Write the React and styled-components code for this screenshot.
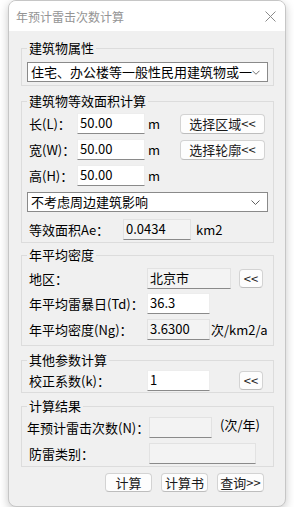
import React from 'react';
import styled, { createGlobalStyle } from 'styled-components';

const GlobalStyle = createGlobalStyle`
  body {
    margin: 0;
    background: #ffffff;
    font-family: "Noto Sans CJK SC", "Noto Sans", sans-serif;
    font-size: 13px;
    color: #000;
  }
`;

// dialog frame
const Window = styled.div`
  margin-left: 8px;
  width: 278px;
  box-sizing: border-box;
  border: 1px solid #c6c6c6;
  border-radius: 8px;
  overflow: hidden;
  background: #f0f0f0;
  box-shadow: 0 3px 10px rgba(0, 0, 0, 0.22);
`;

const TitleBar = styled.div`
  height: 30px;
  background: #ffffff;
  display: flex;
  align-items: center;
  justify-content: space-between;
  padding: 0 9px 0 7px;
  font-size: 12px;
  color: #949494;
`;

const Body = styled.div`
  padding: 8px 11px 14px 12px;
`;

const Group = styled.fieldset`
  margin: ${(p) => p.$mt || 0}px 0 0;
  padding: ${(p) => p.$pt}px 5px ${(p) => p.$pb}px;
  border: 1px solid #dcdcdc;
  min-width: 0;
`;

const Legend = styled.legend`
  padding: 0 2px;
  line-height: 18px;
  font-size: 13px;
`;

const Row = styled.div`
  display: flex;
  align-items: center;
  height: 21px;
  margin-top: ${(p) => p.$mt || 0}px;
`;

const Label = styled.span`
  box-sizing: border-box;
  width: ${(p) => p.$w}px;
  padding-left: ${(p) => (p.$pl ?? 2)}px;
  white-space: nowrap;
  line-height: 1.2;
`;

const Field = styled.input`
  box-sizing: border-box;
  width: ${(p) => p.$w}px;
  height: 21px;
  margin: 0;
  padding: 0 2px 2px;
  font: inherit;
  font-size: 13px;
  color: #000;
  background: ${(p) => (p.readOnly ? '#f3f3f3' : '#ffffff')};
  border: 1px solid ${(p) => (p.readOnly ? '#e2e2e2' : '#ededed')};
  border-bottom-color: #8a8a8a;
  outline: none;
`;

const Unit = styled.span`
  margin-left: ${(p) => p.$ml || 3}px;
  white-space: nowrap;
  line-height: 1.2;
  align-self: ${(p) => (p.$top ? 'flex-start' : 'center')};
`;

const Button = styled.button`
  box-sizing: border-box;
  width: ${(p) => p.$w}px;
  height: ${(p) => p.$h || 20}px;
  margin: 0 ${(p) => p.$mr || 0}px 0 ${(p) => (p.$ml === 'auto' ? 'auto' : `${p.$ml || 0}px`)};
  padding: 0;
  font: inherit;
  font-size: 13px;
  line-height: 1;
  color: #1a1a1a;
  background: #fdfdfd;
  border: 1px solid #d3d3d3;
  border-bottom-color: #bdbdbd;
  border-radius: 4px;
`;

const Combo = styled.div`
  box-sizing: border-box;
  height: 20px;
  margin-top: ${(p) => p.$mt || 0}px;
  display: flex;
  align-items: center;
  padding: 0 7px 0 3px;
  background: #ffffff;
  border: 1px solid #8a8a8a;
`;

const ComboText = styled.span`
  flex: 1;
  white-space: nowrap;
  line-height: 18px;
`;

const Footer = styled.div`
  display: flex;
  justify-content: flex-end;
  gap: 9px;
  margin-top: 6px;
  padding-right: 10px;
`;

const Chevron = () => (
  <svg width="9" height="5" viewBox="0 0 9 5">
    <path d="M0.5 0.5 L4.5 4.5 L8.5 0.5" fill="none" stroke="#606060" strokeWidth="1" />
  </svg>
);

const CloseIcon = () => (
  <svg width="11" height="11" viewBox="0 0 11 11">
    <path d="M0.5 0.5 L10.5 10.5 M10.5 0.5 L0.5 10.5" stroke="#8a8a8a" strokeWidth="1" />
  </svg>
);

const App = () => {
  return (
    <>
      <GlobalStyle />
      <Window>
        <TitleBar>
          <span>年预计雷击次数计算</span>
          <CloseIcon />
        </TitleBar>
        <Body>
          <Group $pt={5} $pb={3}>
            <Legend>建筑物属性</Legend>
            <Combo>
              <ComboText>住宅、办公楼等一般性民用建筑物或一</ComboText>
              <Chevron />
            </Combo>
          </Group>

          <Group $mt={6} $pt={3} $pb={2}>
            <Legend>建筑物等效面积计算</Legend>
            <Row>
              <Label $w={50}>长(L)：</Label>
              <Field $w={68} defaultValue="50.00" />
              <Unit>m</Unit>
              <Button $w={85} $ml="auto" $mr={3}>选择区域&lt;&lt;</Button>
            </Row>
            <Row $mt={5}>
              <Label $w={50}>宽(W)：</Label>
              <Field $w={68} defaultValue="50.00" />
              <Unit>m</Unit>
              <Button $w={85} $ml="auto" $mr={3}>选择轮廓&lt;&lt;</Button>
            </Row>
            <Row $mt={5}>
              <Label $w={50}>高(H)：</Label>
              <Field $w={68} defaultValue="50.00" />
              <Unit>m</Unit>
            </Row>
            <Combo $mt={6}>
              <ComboText>不考虑周边建筑影响</ComboText>
              <Chevron />
            </Combo>
            <Row $mt={7}>
              <Label $w={96}>等效面积Ae：</Label>
              <Field $w={68} readOnly defaultValue="0.0434" />
              <Unit $ml={5}>km2</Unit>
            </Row>
          </Group>

          <Group $mt={3} $pt={4} $pb={5}>
            <Legend>年平均密度</Legend>
            <Row>
              <Label $w={120}>地区：</Label>
              <Field $w={84} readOnly defaultValue="北京市" />
              <Button $w={24} $h={19} $ml={8}>&lt;&lt;</Button>
            </Row>
            <Row $mt={4}>
              <Label $w={120}>年平均雷暴日(Td)：</Label>
              <Field $w={63} defaultValue="36.3" />
            </Row>
            <Row $mt={5}>
              <Label $w={120}>年平均密度(Ng)：</Label>
              <Field $w={63} readOnly defaultValue="3.6300" />
              <Unit $ml={1}>次/km2/a</Unit>
            </Row>
          </Group>

          <Group $mt={5} $pt={1} $pb={1}>
            <Legend>其他参数计算</Legend>
            <Row>
              <Label $w={120}>校正系数(k)：</Label>
              <Field $w={63} defaultValue="1" />
              <Button $w={24} $h={19} $ml={29}>&lt;&lt;</Button>
            </Row>
          </Group>

          <Group $mt={4} $pt={2} $pb={2}>
            <Legend>计算结果</Legend>
            <Row>
              <Label $w={122} $pl={0}>年预计雷击次数(N)：</Label>
              <Field $w={63} readOnly defaultValue="" />
              <Unit $ml={8} $top>(次/年)</Unit>
            </Row>
            <Row $mt={5}>
              <Label $w={122}>防雷类别：</Label>
              <Field $w={107} readOnly defaultValue="" />
            </Row>
          </Group>

          <Footer>
            <Button $w={47} $h={19}>计算</Button>
            <Button $w={47} $h={19}>计算书</Button>
            <Button $w={47} $h={19}>查询&gt;&gt;</Button>
          </Footer>
        </Body>
      </Window>
    </>
  );
};

export default App;
